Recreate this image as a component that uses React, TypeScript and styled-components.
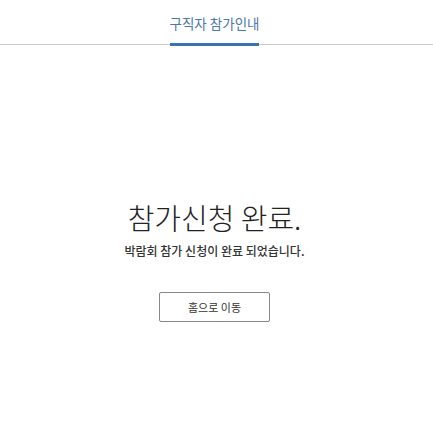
import styled, { createGlobalStyle } from 'styled-components';

const GlobalStyle = createGlobalStyle`
  html, body {
    margin: 0;
    padding: 0;
    background: #ffffff;
  }
  body {
    font-family: 'Noto Sans CJK KR', 'Noto Sans', sans-serif;
    color: #222222;
  }
`;

const App = () => {
  return (
    <>
      <GlobalStyle />
      <Page>
        <TabBar>
          <Tab>구직자 참가인내</Tab>
        </TabBar>
        <Content>
          <Title>참가신청 완료.</Title>
          <Message>박람회 참가 신청이 완료 되었습니다.</Message>
          <HomeButton type="button">홈으로 이동</HomeButton>
        </Content>
      </Page>
    </>
  );
};

export default App;

const Page = styled.div`
  display: flex;
  flex-direction: column;
  width: 100%;
  min-height: 430px;
`;

const TabBar = styled.div`
  display: flex;
  justify-content: center;
  padding-right: 4px;
  border-bottom: 1px solid #cccccc;
  height: 45px;
  box-sizing: border-box;
`;

const Tab = styled.div`
  display: flex;
  align-items: center;
  height: 46px;
  padding-top: 2px;
  box-sizing: border-box;
  margin-bottom: -1px;
  border-bottom: 3px solid #3a74ae;
  color: #4a78a8;
  font-size: 13.5px;
  font-weight: 400;
`;

const Content = styled.div`
  display: flex;
  flex-direction: column;
  align-items: center;
  padding-top: 152px;
  padding-right: 4px;
`;

const Title = styled.h1`
  margin: 0;
  font-size: 29px;
  font-weight: 300;
  line-height: 40px;
  color: #222222;
`;

const Message = styled.p`
  margin: 5px 0 0;
  font-size: 12px;
  font-weight: 500;
  line-height: 18px;
  color: #333333;
`;

const HomeButton = styled.button`
  margin-top: 32px;
  width: 111px;
  height: 30px;
  background: #ffffff;
  border: 1px solid #888888;
  border-radius: 2px;
  font-family: inherit;
  font-size: 11px;
  color: #333333;
  cursor: pointer;
`;
